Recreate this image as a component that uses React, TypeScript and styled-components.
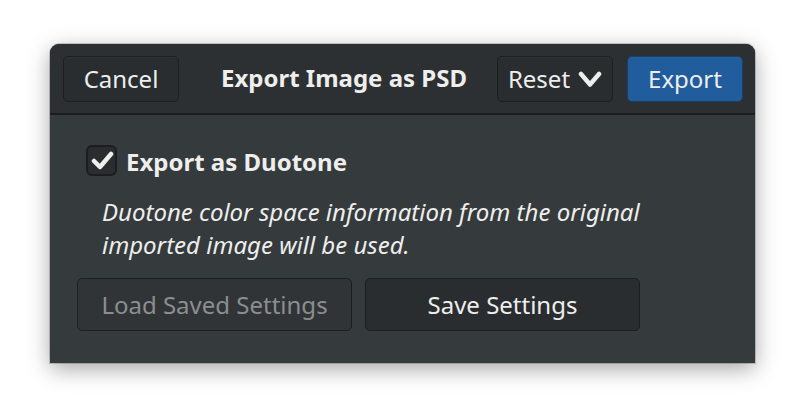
import React from "react";
import styled, { createGlobalStyle } from "styled-components";

const Global = createGlobalStyle`
  html, body { margin: 0; padding: 0; background: #ffffff; }
  body { font-family: "Noto Sans", "Open Sans", sans-serif; }
`;

const Page = styled.div`
  width: 806px;
  height: 420px;
  padding: 44px 0 0 50px;
  box-sizing: border-box;
  background: #ffffff;
`;

const Window = styled.div`
  width: 705px;
  height: 319px;
  border-radius: 9px 9px 0 0;
  background: #353a3d;
  box-shadow: 0 6px 22px rgba(0, 0, 0, 0.35), 0 0 0 1px rgba(0, 0, 0, 0.18);
  display: flex;
  flex-direction: column;
  overflow: hidden;
`;

const HeaderBar = styled.div`
  height: 69px;
  flex: none;
  background: #2d3033;
  border-bottom: 2px solid #1b1d1f;
  display: flex;
  align-items: center;
  padding: 0 12px 0 13px;
  gap: 14px;
`;

const Title = styled.div`
  flex: 1;
  text-align: center;
  color: #eeeeec;
  font-weight: 700;
  font-size: 24px;
  line-height: 30px;
  padding: 0 0 1px 12px;
`;

const HeaderButton = styled.button<{ $primary?: boolean }>`
  height: 46px;
  width: 116px;
  box-sizing: border-box;
  border-radius: 5px;
  border: 1px solid ${(p) => (p.$primary ? "#1a3f68" : "#1c1e20")};
  background: ${(p) => (p.$primary ? "#215d9c" : "#2a2d30")};
  color: #eeeeec;
  font-family: "Noto Sans", sans-serif;
  font-size: 24px;
  line-height: 30px;
  display: flex;
  align-items: center;
  justify-content: center;
  gap: 8px;
  padding: 0;
  box-shadow: inset 0 1px rgba(255, 255, 255, 0.03);
`;

const Body = styled.div`
  flex: 1;
  display: flex;
  flex-direction: column;
  padding: 30px 0 0 27px;
`;

const CheckRow = styled.label`
  display: flex;
  align-items: center;
  gap: 9px;
  padding-left: 9px;
  height: 31px;
`;

const CheckBox = styled.span`
  width: 31px;
  height: 31px;
  box-sizing: border-box;
  border: 2px solid #1b1d1f;
  border-radius: 6px;
  background: #2a2d30;
  display: flex;
  align-items: center;
  justify-content: center;
`;

const CheckLabel = styled.span`
  color: #eeeeec;
  font-weight: 700;
  font-size: 24px;
  line-height: 31px;
  padding-top: 2px;
`;

const Description = styled.p`
  margin: 19px 0 0 25px;
  color: #eeeeec;
  font-style: italic;
  font-size: 24px;
  line-height: 33px;
`;

const ButtonRow = styled.div`
  display: flex;
  gap: 13px;
  margin-top: 17px;
`;

const ActionButton = styled.button<{ $disabled?: boolean }>`
  width: 275px;
  height: 53px;
  box-sizing: border-box;
  border-radius: 5px;
  border: 1px solid #1c1e20;
  background: ${(p) => (p.$disabled ? "#303437" : "#2a2d30")};
  color: ${(p) => (p.$disabled ? "#8b8e8f" : "#eeeeec")};
  font-family: "Noto Sans", sans-serif;
  font-size: 24px;
  line-height: 30px;
  padding: 0;
`;

const Chevron = () => (
  <svg width="24" height="18" viewBox="0 0 24 18">
    <path d="M3 4 L12 14.5 L21 4" fill="none" stroke="#eeeeec" strokeWidth="4.5" strokeLinecap="round" strokeLinejoin="round" />
  </svg>
);

const Tick = () => (
  <svg width="24" height="22" viewBox="0 0 24 22">
    <path d="M4 11 L10 17 L21 4" fill="none" stroke="#eeeeec" strokeWidth="4.5" strokeLinecap="round" strokeLinejoin="round" />
  </svg>
);

export default function App() {
  return (
    <Page>
      <Global />
      <Window>
        <HeaderBar>
          <HeaderButton>Cancel</HeaderButton>
          <Title>Export Image as PSD</Title>
          <HeaderButton>Reset <Chevron /></HeaderButton>
          <HeaderButton $primary>Export</HeaderButton>
        </HeaderBar>
        <Body>
          <CheckRow>
            <CheckBox><Tick /></CheckBox>
            <CheckLabel>Export as Duotone</CheckLabel>
          </CheckRow>
          <Description>
            Duotone color space information from the original
            <br />
            imported image will be used.
          </Description>
          <ButtonRow>
            <ActionButton $disabled>Load Saved Settings</ActionButton>
            <ActionButton>Save Settings</ActionButton>
          </ButtonRow>
        </Body>
      </Window>
    </Page>
  );
}
